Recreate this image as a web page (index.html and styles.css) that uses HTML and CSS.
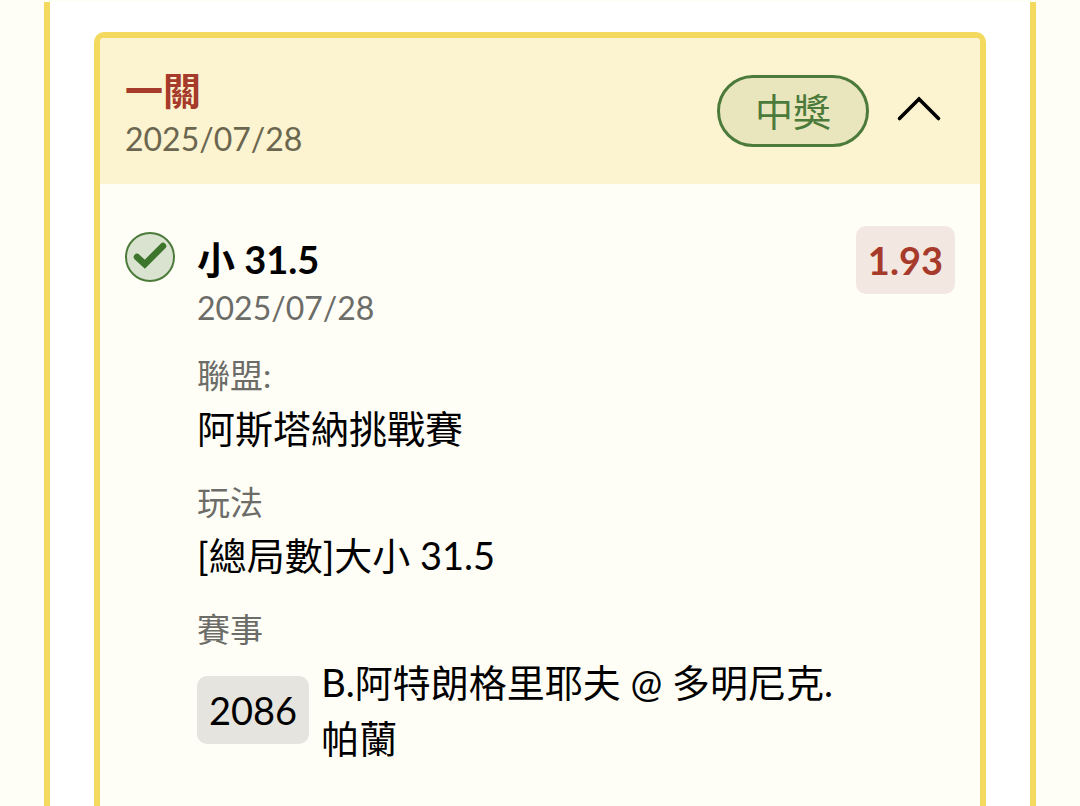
FILE: index.html
```html
<!DOCTYPE html>
<html lang="zh-Hant">
<head>
    <meta charset="UTF-8">
    <meta name="viewport" content="width=device-width, initial-scale=1.0">
    <title>一關</title>
    <link rel="stylesheet" href="styles.css">
</head>
<body>

<main class="panel">
    <section class="ticket">
        <header class="ticket-header">
            <div class="ticket-info">
                <h2>一關</h2>
                <time class="date" datetime="2025-07-28">2025/07/28</time>
            </div>
            <span class="status">中獎</span>
            <button class="toggle" type="button" aria-label="收合" aria-expanded="true" aria-controls="bet">
                <svg viewBox="0 0 50 50" width="50" height="50">
                    <path d="M5.5 32.5 25 13 44.5 32.5" fill="none" stroke="#000" stroke-width="3.6" stroke-linecap="round"/>
                </svg>
            </button>
        </header>

        <div class="bet" id="bet">
            <svg class="check" viewBox="0 0 50 50" width="50" height="50" role="img" aria-label="中獎">
                <circle cx="25" cy="25" r="24" fill="#d9e3d0" stroke="#4b7a3a" stroke-width="2"/>
                <path d="M12 25 19.8 32.2 38 14" fill="none" stroke="#3c752b" stroke-width="6.5" stroke-linecap="round"/>
            </svg>

            <div class="bet-main">
                <h3>小 31.5</h3>
                <time class="date" datetime="2025-07-28">2025/07/28</time>

                <dl class="details">
                    <div>
                        <dt>聯盟:</dt>
                        <dd>阿斯塔納挑戰賽</dd>
                    </div>
                    <div>
                        <dt>玩法</dt>
                        <dd>[總局數]大小 31.5</dd>
                    </div>
                    <div>
                        <dt>賽事</dt>
                        <dd class="match">
                            <span class="tag">2086</span>
                            <span>B.阿特朗格里耶夫 @ 多明尼克.帕蘭</span>
                        </dd>
                    </div>
                </dl>
            </div>

            <span class="tag odds">1.93</span>
        </div>
    </section>
</main>

</body>
</html>
```
FILE: styles.css
```css
* {
    box-sizing: border-box;
}

body {
    margin: 0;
    padding: 2px 44px 0;
    min-height: 100vh;
    display: flex;
    background-color: #fffef6;
    color: #000;
    font-family: Lato, "Noto Sans CJK TC", sans-serif;
    font-size: 38px;
    line-height: 56px;
}

h2, h3, dl, dd {
    margin: 0;
    font-size: 38px;
}

.panel {
    flex: 1;
    padding: 30px 44px 0;
    background-color: #fff;
    border: solid #f3da5f;
    border-width: 0 6px;
    display: flex;
}

.ticket {
    flex: 1;
    border: 6px solid #f3da5f;
    border-bottom: none;
    border-radius: 10px 10px 0 0;
    background-color: #fffef6;
}

.ticket-header {
    display: flex;
    align-items: center;
    padding: 24px 36px 24px 25px;
    background-color: #fcf3d0;
    border-radius: 4px 4px 0 0;
}

.ticket-info {
    flex: 1;
}

.ticket-info h2 {
    color: #a63a2b;
}

.date {
    display: block;
    font-size: 32px;
    line-height: 42px;
    color: #6c6c68;
}

.ticket-header .date {
    color: #6b664f;
}

.status {
    padding: 5px 35px;
    border: 3px solid #4b7a3a;
    border-radius: 36px;
    background-color: #e9e6be;
    color: #4b7a3a;
}

.toggle {
    margin-left: 25px;
    padding: 0;
    border: none;
    background: none;
    cursor: pointer;
}

.toggle svg {
    display: block;
}

.bet {
    display: flex;
    align-items: flex-start;
    padding: 42px 25px;
}

.check {
    flex: none;
    margin-top: 6px;
    margin-right: 22px;
}

.bet-main {
    flex: 1;
    padding-top: 5px;
}

.details div {
    margin-top: 21px;
}

dt {
    font-size: 33px;
    line-height: 50px;
    color: #6c6c68;
}

.match {
    display: flex;
    align-items: center;
    gap: 12px;
}

.tag {
    flex: none;
    padding: 6px 12px;
    border-radius: 10px;
    background-color: #e5e4de;
}

.odds {
    margin-left: 8px;
    background-color: #f3e7e1;
    color: #a63a2b;
    font-weight: bold;
}
```
